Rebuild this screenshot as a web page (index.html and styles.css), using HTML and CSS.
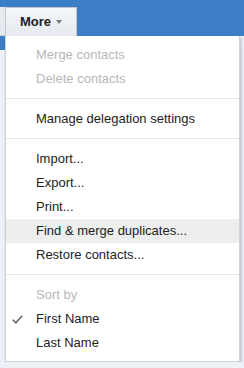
FILE: index.html
```html
<!DOCTYPE html>
<html lang="en">
<head>
    <meta charset="UTF-8">
    <title>More menu</title>
    <link rel="stylesheet" href="styles.css">
</head>
<body>

<!-- Toolbar -->
<div class="toolbar">
    <div class="tab-stub"></div>
    <button class="more-btn">More <span class="caret"></span></button>
</div>

<div class="content">
    <div class="side-strip"><div class="side-block"></div></div>

    <!-- Dropdown menu -->
    <div class="menu">
        <div class="menu-item disabled">Merge contacts</div>
        <div class="menu-item disabled">Delete contacts</div>
        <div class="menu-sep"></div>
        <div class="menu-item">Manage delegation settings</div>
        <div class="menu-sep"></div>
        <div class="menu-item">Import...</div>
        <div class="menu-item">Export...</div>
        <div class="menu-item">Print...</div>
        <div class="menu-item hover">Find &amp; merge duplicates...</div>
        <div class="menu-item">Restore contacts...</div>
        <div class="menu-sep"></div>
        <div class="menu-item disabled">Sort by</div>
        <div class="menu-item">
            <svg class="check" width="11" height="9" viewBox="0 0 11 9">
                <polyline points="0.8,4.8 3.8,7.8 10.2,0.8" fill="none" stroke="#666" stroke-width="1.6"/>
            </svg>
            First Name
        </div>
        <div class="menu-item">Last Name</div>
    </div>
</div>

</body>
</html>
```

FILE: styles.css
```css
body {
    margin: 0;
    font-family: Arial, "Liberation Sans", sans-serif;
    font-size: 13px;
    background-color: #edf2f8;
    overflow: hidden;
}

/* Blue toolbar */
.toolbar {
    display: flex;
    align-items: flex-end;
    height: 36px;
    background-color: #3b7ec6;
}

.tab-stub {
    width: 5px;
    height: 28px;
    background-color: #e5eaf0;
    border-bottom: 1px solid #c9ced4;
}

.more-btn {
    width: 72px;
    height: 29px;
    padding: 0 0 2px 0;
    border: 1px solid #c4c8cd;
    border-bottom: none;
    background: linear-gradient(#f4f6f8, #e6eaef);
    color: #222;
    font-family: inherit;
    font-size: 13px;
    font-weight: bold;
    display: flex;
    align-items: center;
    justify-content: center;
    gap: 5px;
}

.caret {
    width: 0;
    height: 0;
    border-left: 3.5px solid transparent;
    border-right: 3.5px solid transparent;
    border-top: 4px solid #777;
    margin-top: 1px;
}

.content {
    display: flex;
}

.side-strip {
    width: 5px;
}

.side-block {
    height: 14px;
    background-color: #3b7ec6;
}

/* Dropdown */
.menu {
    width: 233px;
    background-color: white;
    border: 1px solid #cfd3d8;
    border-top: none;
    box-shadow: 1px 2px 3px rgba(0, 0, 0, 0.25);
    padding: 7px 0 6px 0;
}

.menu-item {
    height: 24px;
    line-height: 24px;
    padding-left: 30px;
    color: #222;
    position: relative;
}

.menu-item.disabled {
    color: #b8b8b8;
}

.menu-item.hover {
    background-color: #eeeeee;
}

.check {
    position: absolute;
    left: 6px;
    top: 8px;
}

.menu-sep {
    height: 1px;
    margin: 7px 0 8px 0;
    background-color: #e5e5e5;
}
```
